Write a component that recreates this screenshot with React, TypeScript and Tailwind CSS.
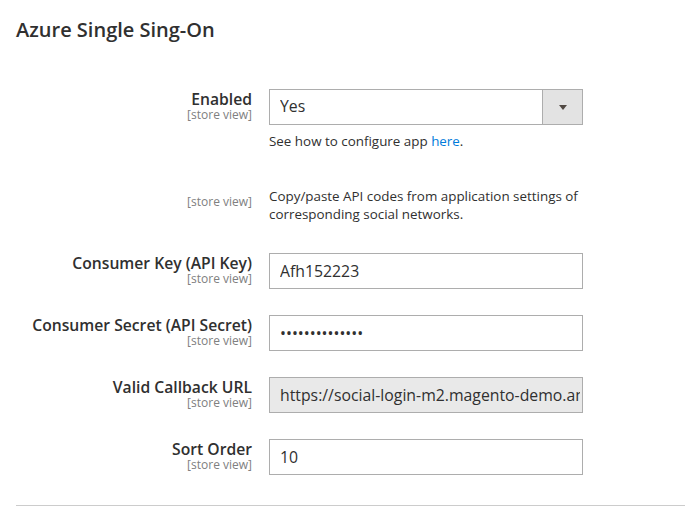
import React, { FC } from 'react';

interface IRow {
  label: string,
  value: string,
  type: 'text' | 'password' | 'readonly',
}

const rows: IRow[] = [
  { label: 'Consumer Key (API Key)', value: 'Afh152223', type: 'text' },
  { label: 'Consumer Secret (API Secret)', value: 'abcdefghijklmn', type: 'password' },
  { label: 'Valid Callback URL', value: 'https://social-login-m2.magento-demo.amasty.com/amsociallogin/social/login/?type=azure', type: 'readonly' },
  { label: 'Sort Order', value: '10', type: 'text' },
];

const Scope: FC<{ className?: string }> = ({ className = '' }) => (
  <div className={`text-[12px] leading-[14px] text-[#808080] ${className}`}>[store view]</div>
);

const Label: FC<{ title: string }> = ({ title }) => (
  <div className="w-[236px] shrink-0 pt-[1px] text-right">
    <div className="text-[15.7px] leading-[18px] font-semibold text-[#303030]">{title}</div>
    <Scope />
  </div>
);

const App: FC = () => (
  <div className="min-h-[513px] bg-white pl-4 pt-[18px] font-['Open_Sans',sans-serif] text-[#303030]">
    <h2 className="text-[20px] leading-[24px] font-semibold text-[#303030]">Azure Single Sing-On</h2>

    <div className="mt-[47px] flex flex-col">
      {/* enabled */}
      <div className="flex">
        <Label title="Enabled" />
        <div className="ml-[17px] w-[314px]">
          <div className="flex h-[36px] border border-[#adadad] bg-white">
            <select
              className="flex-1 appearance-none bg-white pl-[10px] text-[15.8px] text-[#303030] outline-none"
              defaultValue="1"
            >
              <option value="1">Yes</option>
              <option value="0">No</option>
            </select>
            <div className="flex w-[40px] items-center justify-center border-l border-[#adadad] bg-[#e3e3e3]">
              <span className="h-0 w-0 border-x-[4px] border-t-[5px] border-x-transparent border-t-[#514943]" />
            </div>
          </div>
          <div className="mt-[6px] text-[13.4px] leading-[20px]">
            See how to configure app
            {' '}
            <a href="#" className="text-[#007bdb]">here</a>
            .
          </div>
        </div>
      </div>

      {/* api note */}
      <div className="mt-[36px] flex">
        <div className="w-[236px] shrink-0 text-right">
          <Scope className="mt-[8px]" />
        </div>
        <div className="ml-[17px] w-[314px] text-[13.4px] leading-[18px]">
          Copy/paste API codes from application settings of corresponding social networks.
        </div>
      </div>

      {rows.map((e, i) => (
        <div key={e.label} className={`flex ${i === 0 ? 'mt-[30px]' : 'mt-[26px]'}`}>
          <Label title={e.label} />
          <div className="ml-[17px] w-[314px]">
            <input
              type={e.type === 'password' ? 'password' : 'text'}
              readOnly={e.type === 'readonly'}
              defaultValue={e.value}
              className={`block h-[36px] w-full border border-[#adadad] pl-[10px] pr-[2px] text-[15.8px] text-[#303030] outline-none ${
                e.type === 'readonly' ? 'bg-[#e9e9e9]' : 'bg-white'
              }`}
            />
          </div>
        </div>
      ))}
    </div>

    <div className="mt-[30px] border-t border-[#cccccc]" />
  </div>
);

export default App;
